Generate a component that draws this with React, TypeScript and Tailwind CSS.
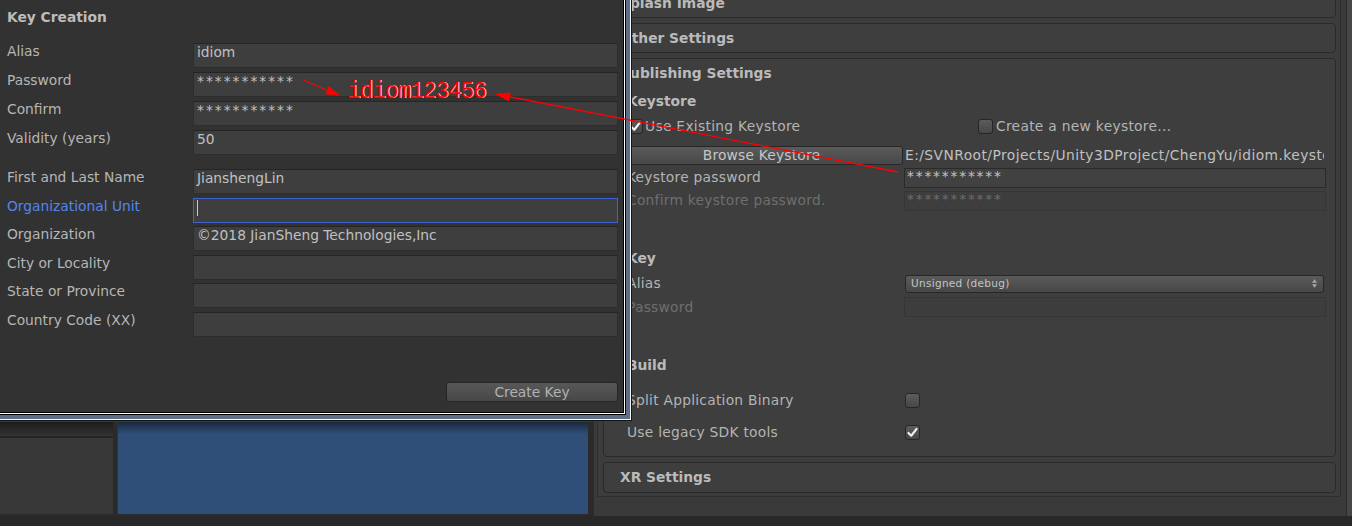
import React from 'react';

const Check = () => (
    <svg viewBox="0 0 16 16" className="w-[13px] h-[13px]">
        <path d="M3 8.5 L6.5 12 L13 3.5" fill="none" stroke="#f2f2f2" strokeWidth="2.6" strokeLinecap="round" strokeLinejoin="round" />
    </svg>
);

const Toggle = ({ checked = false }: { checked?: boolean }) => (
    <div className="w-[15px] h-[15px] shrink-0 rounded-[3px] border border-[#262626] bg-gradient-to-b from-[#5c5c5c] to-[#474747] flex items-center justify-center">
        {checked && <Check />}
    </div>
);

const KeyField = ({ value = '', focused = false, stars = false }: { value?: string; focused?: boolean; stars?: boolean }) => (
    <div
        className={`w-[425px] h-[25px] bg-[#3e3e3e] border ${focused ? 'border-[#3d63cf]' : 'border-[#2d2d2d] border-t-[#252525]'} pl-[3px] text-[#c0c0c0] leading-[17px] ${stars ? 'tracking-[2px]' : ''}`}
    >
        {focused ? <span className="inline-block w-px h-[16px] mt-[1px] bg-[#c8c8c8] align-top" /> : value}
    </div>
);

const KeyRow = ({ label, value, focused, stars, h = 'h-[29px]' }: { label: string; value?: string; focused?: boolean; stars?: boolean; h?: string }) => (
    <div className={`flex items-start ${h}`}>
        <div className={`w-[186px] leading-[17px] ${focused ? 'text-[#5486ec]' : 'text-[#b6b6b6]'}`}>{label}</div>
        <KeyField value={value} focused={focused} stars={stars} />
    </div>
);

const Box = ({ title, className = '', children }: { title?: string; className?: string; children?: React.ReactNode }) => (
    <div className={`rounded-[4px] border border-[#2a2a2a] bg-[#3e3e3e] ${className}`}>
        {title && <div className="h-full flex items-center pl-[16px] font-bold text-[#bababa]">{title}</div>}
        {children}
    </div>
);

const PanelField = ({ value = '', disabled = false }: { value?: string; disabled?: boolean }) => (
    <div
        className={`w-[422px] h-[20px] border pl-[2px] leading-[15px] tracking-[1.8px] ${disabled ? 'border-[#363636] bg-[#3d3d3d] text-[#6c6c6c]' : 'border-[#2a2a2a] bg-[#414141] text-[#c4c4c4]'}`}
    >
        {value}
    </div>
);

const PanelRow = ({ label, dim = false, h, children }: { label: string; dim?: boolean; h: string; children?: React.ReactNode }) => (
    <div className={`flex items-center ${h}`}>
        <div className={`w-[300px] pl-[23px] tracking-[0.25px] ${dim ? 'text-[#6e6e6e]' : 'text-[#b4b4b4]'}`}>{label}</div>
        {children}
    </div>
);

export default function App() {
    return (
        <div className="relative w-[1352px] h-[526px] overflow-hidden bg-[#282828] font-['DejaVu_Sans',sans-serif] text-[13.8px]">
            {/* Editor behind the dialog */}
            <div className="flex h-[516px]">
                <div className="w-[593px] flex flex-col">
                    <div className="flex-1 bg-[#383838]" />
                    <div className="h-[94px] flex">
                        <div className="w-[113px] flex flex-col bg-[#383838] border-b-2 border-[#2a2a2a]">
                            <div className="h-[16px] bg-gradient-to-b from-[#1c1c1c] to-[#333333] border-b-2 border-[#252525]" />
                        </div>
                        <div className="w-[5px] bg-[#2a2a2a] border-r border-[#333]" />
                        <div className="w-[470px] bg-[linear-gradient(to_bottom,#1a283c,#2f4e78_12px)] border-b-2 border-[#2a2a2a]" />
                        <div className="w-[5px] bg-[#2a2a2a]" />
                    </div>
                </div>

                {/* Inspector */}
                <div className="flex-1 flex bg-[#3a3a3a] border-l border-[#2c2c2c]">
                    <div className="flex-1 overflow-hidden">
                        <div className="ml-[3px] -mt-[12px] border-l border-r border-b border-[#2e2e2e] bg-[#3c3c3c] pl-[5px] pr-[4px] pb-[3px] flex flex-col gap-[5px]">
                            <Box title="Splash Image" className="h-[30px]" />
                            <Box title="Other Settings" className="h-[30px]" />
                            <Box className="flex flex-col pb-[12px]">
                                <div className="h-[29px] flex items-center pl-[16px] font-bold text-[#bababa]">Publishing Settings</div>
                                <div className="h-[25px] flex items-center pt-[2px] pl-[23px] font-bold text-[#bababa]">Keystore</div>
                                <div className="h-[26px] flex items-center tracking-[0.3px]">
                                    <div className="w-[374px] pl-[24px] flex items-center gap-[2px] text-[#b4b4b4]">
                                        <Toggle checked />
                                        <span>Use Existing Keystore</span>
                                    </div>
                                    <div className="flex items-center gap-[3px] text-[#b4b4b4]">
                                        <Toggle />
                                        <span>Create a new keystore...</span>
                                    </div>
                                </div>
                                <div className="h-[6px]" />
                                <div className="h-[21px] flex items-center">
                                    <div className="ml-[16px] w-[283px] h-[19px] rounded-[3px] border border-[#272727] bg-gradient-to-b from-[#5a5a5a] to-[#484848] text-center leading-[17px] tracking-[0.2px] text-[#c6c6c6]">
                                        Browse Keystore
                                    </div>
                                    <div className="ml-[2px] w-[419px] overflow-hidden whitespace-nowrap text-[#c0c0c0] leading-[21px] tracking-[0.45px]">
                                        E:/SVNRoot/Projects/Unity3DProject/ChengYu/idiom.keystore
                                    </div>
                                </div>
                                <PanelRow label="Keystore password" h="h-[23px]">
                                    <PanelField value="***********" />
                                </PanelRow>
                                <PanelRow label="Confirm keystore password." dim h="h-[23px]">
                                    <PanelField value="***********" disabled />
                                </PanelRow>
                                <div className="h-[35px]" />
                                <div className="h-[23px] flex items-center pl-[23px] font-bold text-[#bababa]">Key</div>
                                <PanelRow label="Alias" h="h-[27px]">
                                    <div className="ml-[1px] w-[419px] h-[18px] rounded-[3px] border border-[#272727] bg-gradient-to-b from-[#5a5a5a] to-[#474747] flex items-center justify-between pl-[5px] pr-[6px] text-[10.5px] tracking-[0.3px] text-[#c4c4c4]">
                                        <span>Unsigned (debug)</span>
                                        <svg viewBox="0 0 6 10" className="w-[5px] h-[9px]">
                                            <path d="M3 0 L6 4 L0 4 Z M0 6 L6 6 L3 10 Z" fill="#a8a8a8" />
                                        </svg>
                                    </div>
                                </PanelRow>
                                <PanelRow label="Password" dim h="h-[20px]">
                                    <PanelField disabled />
                                </PanelRow>
                                <div className="h-[37px]" />
                                <div className="h-[22px] flex items-center pl-[23px] font-bold text-[#bababa]">Build</div>
                                <div className="h-[12px]" />
                                <PanelRow label="Split Application Binary" h="h-[24px]">
                                    <div className="ml-[1px]"><Toggle /></div>
                                </PanelRow>
                                <div className="h-[8px]" />
                                <PanelRow label="Use legacy SDK tools" h="h-[24px]">
                                    <div className="ml-[1px]"><Toggle checked /></div>
                                </PanelRow>
                            </Box>
                            <Box title="XR Settings" className="h-[31px]" />
                        </div>
                    </div>
                    <div className="w-[11px] flex">
                        <div className="w-[5px]" />
                        <div className="flex-1 bg-[#464646] border-l border-[#2a2a2a]" />
                    </div>
                </div>
            </div>
            <div className="h-[10px] bg-[#282828]" />

            {/* Key Creation dialog window */}
            <div className="absolute left-0 top-0 border-r border-b border-[#151515]">
                <div className="border-r border-b border-[#f4f4f4]">
                    <div className="border-r-4 border-b-4 border-[#5e6e84]">
                        <div className="border-r border-b border-black">
                            <div className="border-r border-b border-white">
                                <div className="border-r border-b border-black">
                                    <div className="w-[623px] h-[412px] bg-[#323232] flex flex-col pl-[7px]">
                                        <div className="h-[34px] flex items-center font-bold text-[#bcbcbc]">Key Creation</div>
                                        <div className="h-[9px]" />
                                        <KeyRow label="Alias" value="idiom" />
                                        <KeyRow label="Password" value="***********" stars />
                                        <KeyRow label="Confirm" value="***********" stars />
                                        <KeyRow label="Validity (years)" value="50" />
                                        <div className="h-[10px]" />
                                        <KeyRow label="First and Last Name" value="JianshengLin" h="h-[28.6px]" />
                                        <KeyRow label="Organizational Unit" focused h="h-[28.6px]" />
                                        <KeyRow label="Organization" value="©2018 JianSheng Technologies,Inc" h="h-[28.6px]" />
                                        <KeyRow label="City or Locality" h="h-[28.6px]" />
                                        <KeyRow label="State or Province" h="h-[28.6px]" />
                                        <KeyRow label="Country Code (XX)" h="h-[28.6px]" />
                                        <div className="mt-auto mb-[10px] self-end mr-[5px] w-[172px] h-[20px] rounded-[3px] border border-[#262626] bg-gradient-to-b from-[#585858] to-[#474747] text-center leading-[18px] text-[#b2b2b2]">
                                            Create Key
                                        </div>
                                    </div>
                                </div>
                            </div>
                        </div>
                    </div>
                </div>
            </div>

            {/* Red annotation */}
            <svg className="absolute left-0 top-0 pointer-events-none" width="1352" height="526">
                <line x1="303" y1="80" x2="329" y2="91" stroke="#ff0000" strokeWidth="1.3" />
                <polygon points="340,95.5 325.4,94.3 328.8,86" fill="#ff0000" />
                <line x1="898" y1="172" x2="508" y2="96.5" stroke="#ff0000" strokeWidth="1.3" />
                <polygon points="495,94 510.6,92.4 508.8,101.3" fill="#ff0000" />
            </svg>
            <span className="absolute left-[347px] top-[78px] font-['Liberation_Mono',monospace] text-[23px] leading-[28px] tracking-[-1.2px] text-[#ff0000] [text-shadow:1px_0_0_#ffc8c8]">
                idiom123456
            </span>
        </div>
    );
}
